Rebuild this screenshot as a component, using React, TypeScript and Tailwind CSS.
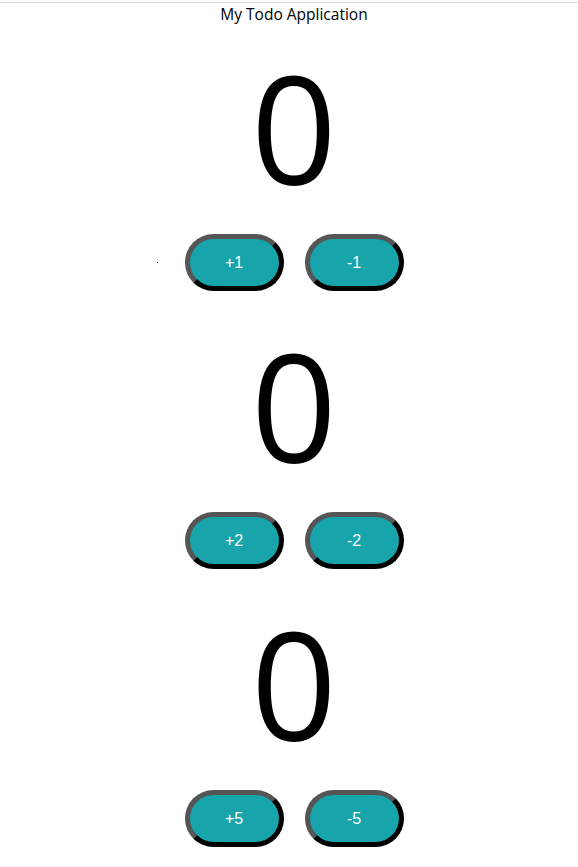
const counters = [1, 2, 5];

function Counter({ step, first }: { step: number; first?: boolean }) {
  return (
    <div className="flex flex-col items-center">
      <div className="h-[150px] text-[150px] leading-[150px] text-black" style={{ fontFamily: '"Open Sans", sans-serif' }}>
        0
      </div>
      <div className="relative mt-[32px] flex gap-[21px]">
        {first && <span className="absolute left-[-28px] top-[28px] h-px w-px bg-[#0000ff]" />}
        <button className="h-[57px] w-[99px] rounded-full border-[5px] border-t-[#555] border-l-[#555] border-b-black border-r-black bg-[#17a5ab] font-['Liberation_Sans',Arial,sans-serif] text-base text-white">
          +{step}
        </button>
        <button className="h-[57px] w-[99px] rounded-full border-[5px] border-t-[#555] border-l-[#555] border-b-black border-r-black bg-[#17a5ab] font-['Liberation_Sans',Arial,sans-serif] text-base text-white">
          -{step}
        </button>
      </div>
    </div>
  );
}

export default function App() {
  return (
    <div className="min-h-[867px] bg-white">
      <div className="mt-[2px] h-px bg-[#dcdcdc]" />
      <div className="pl-[10px]">
        <h1 className="text-center font-['Open_Sans',sans-serif] text-[15.5px] leading-[22px] text-black">My Todo Application</h1>
        <div className="mt-[27px] flex flex-col gap-[39px]">
          {counters.map((s, i) => (
            <Counter key={s} step={s} first={i === 0} />
          ))}
        </div>
      </div>
    </div>
  );
}
